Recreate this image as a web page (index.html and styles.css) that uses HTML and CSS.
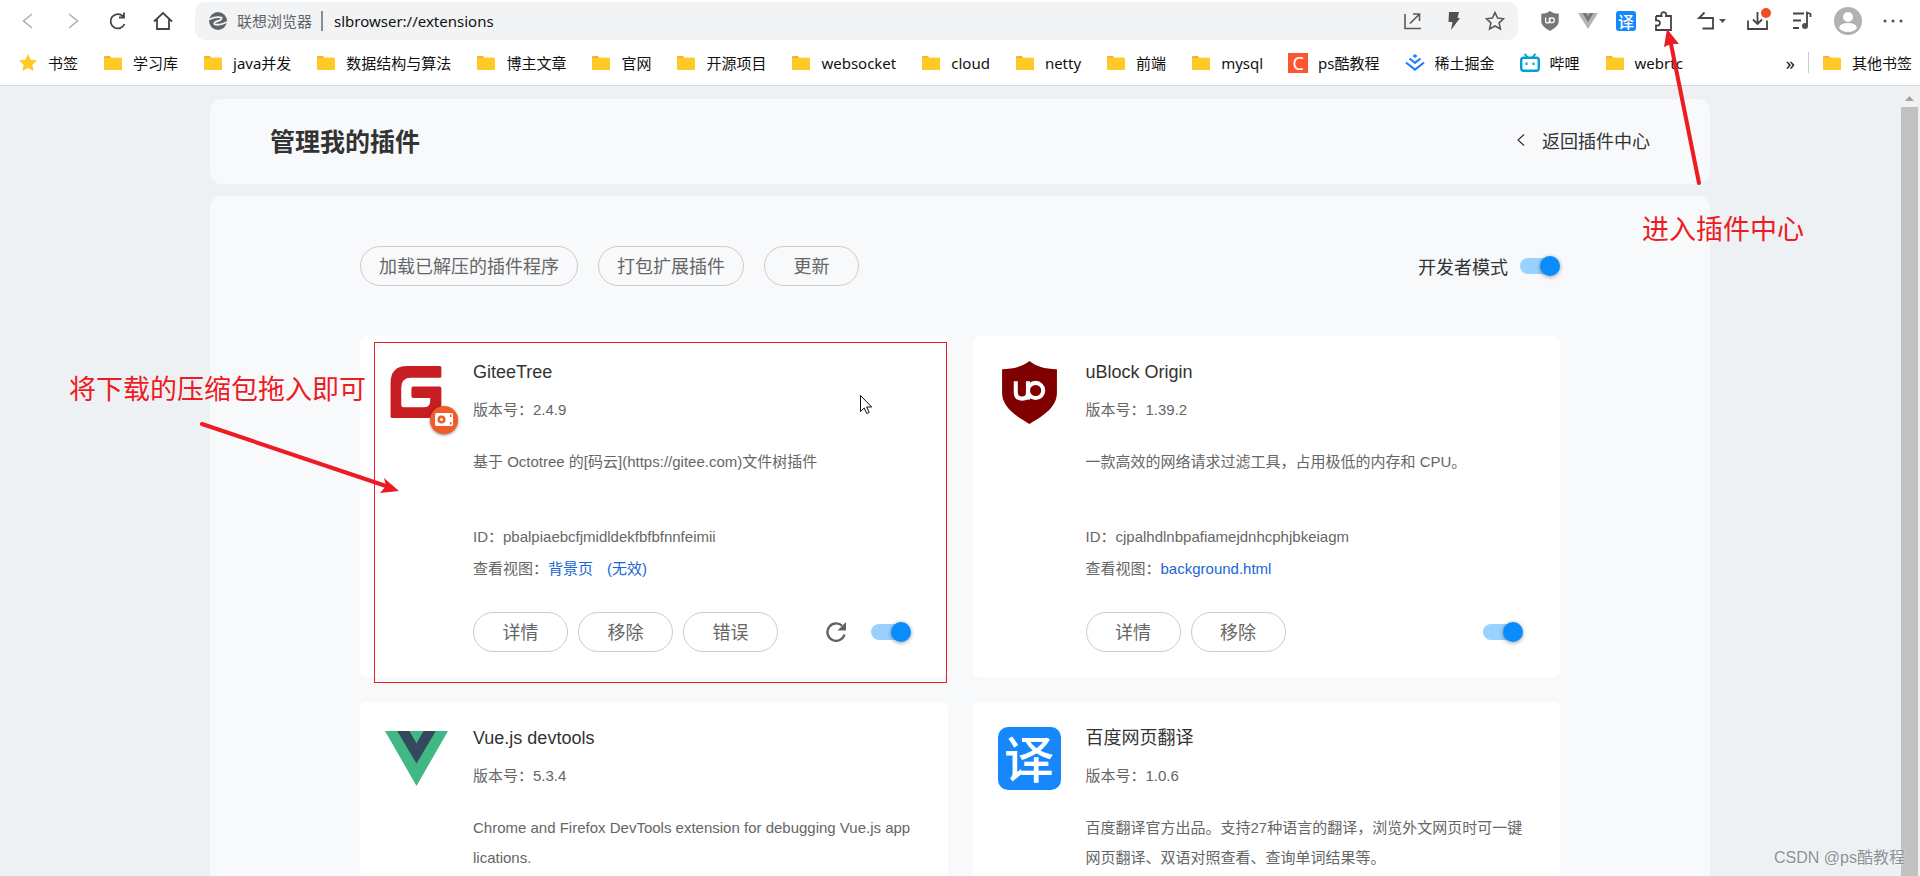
FILE: index.html
```html
<!DOCTYPE html>
<html lang="zh-CN">
<head>
<meta charset="utf-8">
<title>管理我的插件</title>
<link rel="stylesheet" href="styles.css">
</head>
<body>
<svg class="defs" aria-hidden="true">
  <symbol id="folder" viewBox="0 0 20 20">
    <path d="M1 3.6Q1 3 1.600 3H7l1.500 2.500H1z" fill="#fcb02c"/>
    <path d="M1 5h17.400q.6 0 .6.600v10.800q0 .6-.6.600H1.600q-.6 0-.6-.6z" fill="#ffca28"/>
    <path d="M8 4h10.500v1H8z" fill="#ffe9a6"/>
  </symbol>
  <symbol id="shield" viewBox="0 0 62 62">
    <path d="M31 0C37 5 46 8 58 8V31C58 44 48 52 31 62C14 52 4 44 4 31V8C16 8 25 5 31 0z" fill="currentColor"/>
    <path d="M17.500 20v11q0 6 6 6t6-5.500V20" fill="none" stroke="#fff" stroke-width="4"/>
    <path d="M29.500 28v10" stroke="#fff" stroke-width="4"/>
    <circle cx="37" cy="29" r="7.500" fill="none" stroke="#fff" stroke-width="4"/>
  </symbol>
</svg>

<header class="browser">
  <div class="toolbar">
    <nav class="nav">
      <button class="tool faded" aria-label="后退"><svg viewBox="0 0 20 20"><path d="M14 3 5.500 10l8.500 7"/></svg></button>
      <button class="tool faded" aria-label="前进"><svg viewBox="0 0 20 20"><path d="m6 3 8.500 7L6 17"/></svg></button>
      <button class="tool" aria-label="刷新"><svg viewBox="0 0 20 20"><path class="bold" d="M16.500 13A7.200 7.200 0 1 1 15 5.200M16 1.500V6.500h-5"/></svg></button>
      <button class="tool" aria-label="主页"><svg viewBox="0 0 20 20"><path class="bold" d="M1 10.500 10 2l9 8.500M4 8.500V18h12V8.500"/></svg></button>
    </nav>
    <form class="address">
      <svg class="site" viewBox="0 0 18 18"><circle cx="9" cy="9" r="9" fill="#5f6368"/><path d="M0 7.500Q7 4 12.500 5.500 13 8 9 9 4.500 10 5.500 12.200 9.500 14 18 10" fill="none" stroke="#f1f3f4" stroke-width="1.800"/></svg>
      <label class="origin" for="url">联想浏览器</label>
      <input class="url" id="url" type="text" value="slbrowser://extensions">
      <button type="button" class="tool" aria-label="分享"><svg viewBox="0 0 20 20"><path d="M2 3v14.500h16M7 12.500 16.500 3M10 3h6.500v7"/></svg></button>
      <button type="button" class="tool" aria-label="加速"><svg viewBox="0 0 20 20"><path d="M5 1h10l-1.500 6H16L7 19l1.500-8H4.500z" class="solid"/></svg></button>
      <button type="button" class="tool" aria-label="收藏"><svg viewBox="0 0 20 20"><path d="m10 1.500 2.600 5.600 6 .7-4.500 4.100 1.300 6.100L10 15l-5.400 3 1.300-6.100L1.400 7.800l6-.7z"/></svg></button>
    </form>
    <div class="actions">
      <button class="tool gray" aria-label="uBlock Origin"><svg viewBox="0 0 62 62"><use href="#shield"/></svg></button>
      <button class="tool" aria-label="Vue.js devtools"><svg viewBox="0 0 20 20"><path d="M0 2h20L10 18z" fill="#b4b4b4" stroke="none"/><path d="M4.500 2h3.800L10 5.200 11.700 2h3.800L10 11.200z" fill="#777" stroke="none"/></svg></button>
      <button class="tool translate small" aria-label="百度网页翻译">译</button>
      <button class="tool" aria-label="插件中心"><svg viewBox="0 0 20 20"><path class="bold" d="M2 5h5.500q-1-3.500 2-3.800 3.500.3 2.500 3.800H17v4.500M17 9v10H2v-4.500q3.800.5 4-2.500-.2-3-4-2.500V5"/></svg></button>
      <button class="tool w36" aria-label="撤销"><svg viewBox="0 0 36 20"><path class="bold" d="M12.500 1.500 7 7h14v10.500H10.500"/><path d="M27 8h7l-3.500 4z" class="solid"/></svg></button>
      <button class="tool w24 download" aria-label="下载"><svg viewBox="0 0 24 20"><path class="bold" d="M2 9.500V18h19V9.500M11.500 1v11.500M7 8.500l4.500 4.500L16 8.500"/></svg></button>
      <button class="tool w28" aria-label="音乐"><svg viewBox="0 0 28 20"><path class="bold" d="M5 2.500h11M5 9.500h8M5 17h6M19 15V1.500l3.500 1.500v3"/><circle cx="17" cy="15" r="3" class="solid"/></svg></button>
      <button class="tool avatar" aria-label="用户"><svg viewBox="0 0 28 28"><circle cx="14" cy="14" r="14" fill="#b1b1b1" stroke="none"/><circle cx="14" cy="10" r="5" fill="#fff" stroke="none"/><path d="M5 21q1-5 9-5t9 5q-3 4-9 4t-9-4z" fill="#fff" stroke="none"/></svg></button>
      <button class="tool w26" aria-label="更多"><svg viewBox="0 0 26 20"><g class="solid"><circle cx="5" cy="10" r="1.500"/><circle cx="13" cy="10" r="1.500"/><circle cx="21" cy="10" r="1.500"/></g></svg></button>
    </div>
  </div>
  <nav class="bookmarks">
    <a href="#"><svg viewBox="0 0 20 20"><path d="m10 1 2.700 5.700 6.300.8-4.600 4.300 1.200 6.200L10 15l-5.600 3 1.200-6.200L1 7.500l6.300-.8z" fill="#ffca28"/></svg>书签</a>
    <a href="#"><svg><use href="#folder"/></svg>学习库</a>
    <a href="#"><svg><use href="#folder"/></svg>java并发</a>
    <a href="#"><svg><use href="#folder"/></svg>数据结构与算法</a>
    <a href="#"><svg><use href="#folder"/></svg>博主文章</a>
    <a href="#"><svg><use href="#folder"/></svg>官网</a>
    <a href="#"><svg><use href="#folder"/></svg>开源项目</a>
    <a href="#"><svg><use href="#folder"/></svg>websocket</a>
    <a href="#"><svg><use href="#folder"/></svg>cloud</a>
    <a href="#"><svg><use href="#folder"/></svg>netty</a>
    <a href="#"><svg><use href="#folder"/></svg>前端</a>
    <a href="#"><svg><use href="#folder"/></svg>mysql</a>
    <a href="#"><span class="c-icon">C</span>ps酷教程</a>
    <a href="#"><svg viewBox="0 0 20 20"><path d="m10 1 2.500 2L10 5 7.500 3z" fill="#1e80ff"/><path d="m4.500 5.500 5.500 4.300 5.500-4.300M1 9.500l9 7 9-7" fill="none" stroke="#1e80ff" stroke-width="2.200"/></svg>稀土掘金</a>
    <a href="#"><svg viewBox="0 0 20 20"><rect x="1.200" y="4.700" width="17.600" height="13" rx="2.500" fill="none" stroke="#00a1d6" stroke-width="2.400"/><path d="m4.500.8 3 3.500m8-3.500-3 3.500" stroke="#00a1d6" stroke-width="2"/><path d="M6.500 9.500v2.500M13.500 9.500v2.500" stroke="#00a1d6" stroke-width="2"/></svg>哔哩</a>
    <a href="#"><svg><use href="#folder"/></svg>webrtc</a>
    <button class="more" aria-label="更多书签">»</button>
    <a href="#" class="other"><svg><use href="#folder"/></svg>其他书签</a>
  </nav>
</header>

<main class="page">
  <div class="container">
    <section class="panel heading">
      <h1>管理我的插件</h1>
      <a class="back" href="#"><svg viewBox="0 0 10 14"><path d="M8 1.500 2 7l6 5.500" fill="none" stroke="#333" stroke-width="1.200"/></svg>返回插件中心</a>
    </section>

    <section class="panel content">
      <div class="controls">
        <button class="pill">加载已解压的插件程序</button>
        <button class="pill">打包扩展插件</button>
        <button class="pill">更新</button>
        <label class="devmode" for="dev">开发者模式<input class="switch" id="dev" type="checkbox" checked></label>
      </div>

      <div class="cards">
        <article class="card">
          <div class="logo">
            <svg viewBox="0 0 62 62"><path d="M22 5H54q1.500 0 1.500 1.500V15q0 1.500-1.500 1.500H25.500Q16 16.500 16 26V43.500q0 2 2 2H38q6.500 0 6.500-6.500V36.500H28q-2 0-2-2V27q0-2 2-2H53.500q2 0 2 2V42q0 14-14 14H7q-1.500 0-1.500-1.500V21.500Q5.500 5 22 5z" fill="#c71d23"/></svg>
            <span class="badge"><svg viewBox="0 0 18 14"><rect width="18" height="13" rx="1.500" fill="#fff"/><circle cx="6.500" cy="6.500" r="4" fill="#f15a29"/><circle cx="6.500" cy="6.500" r="1.500" fill="#fff"/><path d="M15 1.500h1.500V4H15zM15 9h1.500v2.500H15z" fill="#f15a29"/></svg></span>
          </div>
          <div class="info">
            <h2>GiteeTree</h2>
            <p class="version">版本号：2.4.9</p>
            <p class="desc">基于 Octotree 的[码云](https://gitee.com)文件树插件</p>
            <p class="meta">ID：pbalpiaebcfjmidldekfbfbfnnfeimii</p>
            <p class="meta">查看视图：<a href="#">背景页</a><a class="invalid" href="#">(无效)</a></p>
            <div class="buttons">
              <button class="pill">详情</button>
              <button class="pill">移除</button>
              <button class="pill">错误</button>
              <button class="reload" aria-label="重新加载"><svg viewBox="0 0 20 20"><path d="M18.500 12.500A8.700 8.700 0 1 1 16 3.700" fill="none" stroke="#5f6368" stroke-width="2.400"/><path d="M20 0v8.500h-8.500z" fill="#5f6368"/></svg></button>
              <input class="switch" type="checkbox" aria-label="启用 GiteeTree" checked>
            </div>
          </div>
        </article>

        <article class="card">
          <div class="logo maroon"><svg viewBox="0 0 62 62"><use href="#shield"/></svg></div>
          <div class="info">
            <h2>uBlock Origin</h2>
            <p class="version">版本号：1.39.2</p>
            <p class="desc">一款高效的网络请求过滤工具，占用极低的内存和 CPU。</p>
            <p class="meta">ID：cjpalhdlnbpafiamejdnhcphjbkeiagm</p>
            <p class="meta">查看视图：<a href="#">background.html</a></p>
            <div class="buttons">
              <button class="pill">详情</button>
              <button class="pill">移除</button>
              <input class="switch" type="checkbox" aria-label="启用 uBlock Origin" checked>
            </div>
          </div>
        </article>

        <article class="card">
          <div class="logo"><svg viewBox="0 0 62 62"><path d="M0 4h62L31 58z" fill="#41b883"/><path d="M12 4h12l7 12 7-12h12L31 36z" fill="#34495e"/></svg></div>
          <div class="info">
            <h2>Vue.js devtools</h2>
            <p class="version">版本号：5.3.4</p>
            <p class="desc">Chrome and Firefox DevTools extension for debugging Vue.js applications.</p>
          </div>
        </article>

        <article class="card">
          <div class="logo translate">译</div>
          <div class="info">
            <h2>百度网页翻译</h2>
            <p class="version">版本号：1.0.6</p>
            <p class="desc">百度翻译官方出品。支持27种语言的翻译，浏览外文网页时可一键网页翻译、双语对照查看、查询单词结果等。</p>
          </div>
        </article>
      </div>
    </section>
  </div>
  <div class="scrollbar"><svg viewBox="0 0 17 17"><path d="M4 11h9L8.500 6z" fill="#a3a3a3"/></svg></div>
</main>

<div class="highlight"></div>
<svg class="arrows" aria-hidden="true">
  <g stroke="#ed1c24" stroke-width="4" stroke-linecap="round"><path d="M202 424 386 486"/><path d="M1699 183 1671 44"/></g>
  <path d="M399 491 384 478 386 486 380 493zM1667 29 1664 47 1671 44 1679 44z" fill="#ed1c24"/>
</svg>
<svg class="cursor" viewBox="0 0 12 19" aria-hidden="true"><path d="M.5.500v16l3.700-3.500 2.500 5.500 2.500-1-2.500-5.500h5z" fill="#fff" stroke="#111"/></svg>
<p class="note drag">将下载的压缩包拖入即可</p>
<p class="note enter">进入插件中心</p>
<p class="watermark">CSDN @ps酷教程</p>
</body>
</html>
```

FILE: styles.css
```css
* {
  box-sizing: border-box;
}

body {
  position: relative;
  display: flex;
  flex-direction: column;
  height: 100vh;
  margin: 0;
  overflow: hidden;
  color: #333;
  background: #edf1f4;
  font-family: "Liberation Sans", "Noto Sans CJK SC", sans-serif;
}

h1, h2, p {
  margin: 0;
  font-weight: 400;
}

a {
  color: inherit;
  text-decoration: none;
}

button, input {
  margin: 0;
  padding: 0;
  border: 0;
  background: none;
  color: inherit;
  font: inherit;
}

svg {
  display: block;
}

.defs {
  position: absolute;
  width: 0;
  height: 0;
}

/* Browser chrome */

.browser {
  flex: none;
  border-bottom: 1px solid #d3d8dc;
  background: #fff;
  color: #111;
  font-family: "Noto Sans", "Noto Sans CJK SC", sans-serif;
  font-size: 15px;
}

.toolbar {
  display: flex;
  align-items: center;
  height: 42px;
  padding: 1px 14px 1px 18px;
}

.nav {
  display: flex;
  gap: 25px;
  margin-right: 22px;
}

.tool {
  position: relative;
  flex: none;
  width: 20px;
  height: 20px;
}

.tool svg {
  width: 100%;
  height: 100%;
  fill: none;
  stroke: #5a5a5a;
  stroke-width: 1.6;
}

.tool .bold {
  stroke: #444;
  stroke-width: 1.8;
}

.tool .solid {
  fill: #505050;
  stroke: none;
}

.faded svg {
  stroke: #b0b0b0;
}

.gray {
  color: #777;
}

.gray svg {
  stroke: none;
}

.w24 { width: 24px; }
.w26 { width: 26px; }
.w28 { width: 28px; }
.w36 { width: 36px; }

.avatar {
  width: 28px;
  height: 28px;
}

.download::after {
  content: "";
  position: absolute;
  top: -3px;
  right: -1px;
  width: 10px;
  height: 10px;
  border-radius: 50%;
  background: #f04e23;
}

.address {
  flex: 1;
  display: flex;
  align-items: center;
  gap: 21px;
  height: 38px;
  padding: 0 13px 0 14px;
  border-radius: 10px;
  background: #f1f3f4;
}

.site {
  width: 18px;
  height: 18px;
  margin-right: -11px;
}

.origin {
  padding-right: 9px;
  margin-right: -10px;
  border-right: 2px solid #8a8d91;
  color: #5f6368;
  line-height: 20px;
}

.url {
  flex: 1;
  min-width: 0;
  outline: 0;
}

.actions {
  display: flex;
  align-items: center;
  gap: 18px;
  margin-left: 22px;
}

.translate {
  background: #1788fb;
  color: #fff;
  font-family: "Noto Sans CJK SC", sans-serif;
  font-weight: 500;
  text-align: center;
}

.small {
  border-radius: 3px;
  font-size: 16px;
  line-height: 20px;
}

.bookmarks {
  display: flex;
  align-items: center;
  gap: 25px;
  height: 43px;
  padding: 0 8px 2px 18px;
  white-space: nowrap;
}

.bookmarks a {
  display: flex;
  align-items: center;
  gap: 10px;
}

.bookmarks svg {
  width: 20px;
  height: 20px;
}

.c-icon {
  width: 20px;
  height: 20px;
  background: #fc5531;
  color: #fff;
  font-size: 18px;
  line-height: 20px;
  text-align: center;
}

.more {
  margin-left: auto;
  margin-right: -12px;
  font-size: 18px;
}

.bookmarks .other {
  padding-left: 13px;
  border-left: 1px solid #ccc;
}

/* Extension page */

.page {
  position: relative;
  flex: 1;
  min-height: 0;
  overflow: hidden;
}

.container {
  display: flex;
  flex-direction: column;
  gap: 12px;
  max-width: 1500px;
  margin: 0 auto;
  padding-top: 13px;
}

.panel {
  border-radius: 12px;
  background: #f8f9fb;
}

.heading {
  display: flex;
  align-items: center;
  justify-content: space-between;
  height: 85px;
  padding: 0 60px 4px;
}

h1 {
  font-size: 25px;
  font-weight: 700;
}

.back {
  display: flex;
  align-items: center;
  gap: 16px;
  font-size: 18px;
}

.back svg {
  width: 10px;
  height: 14px;
}

.content {
  padding: 50px 150px 60px;
}

.controls {
  display: flex;
  align-items: center;
  gap: 20px;
  margin-bottom: 50px;
}

.pill {
  min-width: 95px;
  height: 40px;
  padding: 0 18px 2px;
  border: 1px solid #ccc;
  border-radius: 20px;
  color: #666;
  font-size: 18px;
}

.devmode {
  display: flex;
  align-items: center;
  gap: 12px;
  margin-left: auto;
  font-size: 18px;
}

.switch {
  position: relative;
  width: 40px;
  height: 20px;
  appearance: none;
}

.switch::before {
  content: "";
  position: absolute;
  inset: 2px 4px 2px 0;
  border-radius: 8px;
  background: #9bd2fd;
}

.switch::after {
  content: "";
  position: absolute;
  top: 0;
  right: 0;
  width: 20px;
  height: 20px;
  border-radius: 50%;
  background: #0a8cff;
  box-shadow: 0 1px 4px rgba(0, 0, 0, 0.4);
}

.cards {
  display: grid;
  grid-template-columns: 1fr 1fr;
  gap: 25px;
}

.card {
  display: flex;
  gap: 25px;
  min-height: 341px;
  padding: 25px 37px 25px 25px;
  border-radius: 6px;
  background: #fff;
}

.logo {
  position: relative;
  flex: none;
  width: 63px;
  height: 63px;
}

.maroon {
  color: #800000;
}

.logo.translate {
  border-radius: 10px;
  font-size: 50px;
  line-height: 58px;
}

.badge {
  position: absolute;
  right: -10px;
  bottom: -10px;
  display: grid;
  place-items: center;
  width: 28px;
  height: 28px;
  border-radius: 50%;
  background: #f15a29;
  box-shadow: 0 1px 3px rgba(0, 0, 0, 0.5);
}

.badge svg {
  width: 18px;
  height: 14px;
}

.info {
  flex: 1;
  min-width: 0;
  color: #666;
  font-size: 15px;
}

h2 {
  color: #333;
  font-size: 18px;
  line-height: 23px;
}

.version {
  margin-top: 14px;
  line-height: 24px;
}

.desc {
  min-height: 60px;
  margin: 25px 0 14px;
  line-height: 30px;
  word-break: break-all;
}

.meta {
  line-height: 32px;
}

.meta a {
  color: #1a66d6;
}

.meta .invalid {
  margin-left: 14px;
}

.buttons {
  display: flex;
  align-items: center;
  gap: 10px;
  margin-top: 27px;
}

.buttons .switch {
  margin-left: auto;
}

.reload {
  width: 20px;
  height: 20px;
  margin-left: auto;
}

.reload + .switch {
  margin-left: 15px;
}

.scrollbar {
  position: absolute;
  inset: 4px 2px 0 auto;
  width: 17px;
  background: #c1c1c1;
}

.scrollbar svg {
  width: 17px;
  height: 17px;
  background: #f1f1f1;
}

/* Annotations over the page */

.highlight {
  position: absolute;
  top: 342px;
  left: 374px;
  width: 573px;
  height: 341px;
  border: 1px solid #ed1c24;
  pointer-events: none;
}

.arrows {
  position: absolute;
  inset: 0;
  width: 100%;
  height: 100%;
  pointer-events: none;
}

.cursor {
  position: absolute;
  top: 395px;
  left: 860px;
  width: 12px;
  height: 19px;
}

.note {
  position: absolute;
  color: #ed1c24;
  font-size: 27px;
  line-height: 36px;
  white-space: nowrap;
}

.drag {
  top: 372px;
  left: 69px;
}

.enter {
  top: 212px;
  left: 1642px;
}

.watermark {
  position: absolute;
  right: 15px;
  bottom: 6px;
  color: #8d9094;
  font-size: 16px;
  line-height: 24px;
  text-shadow: 0 0 2px #fff;
}
```
